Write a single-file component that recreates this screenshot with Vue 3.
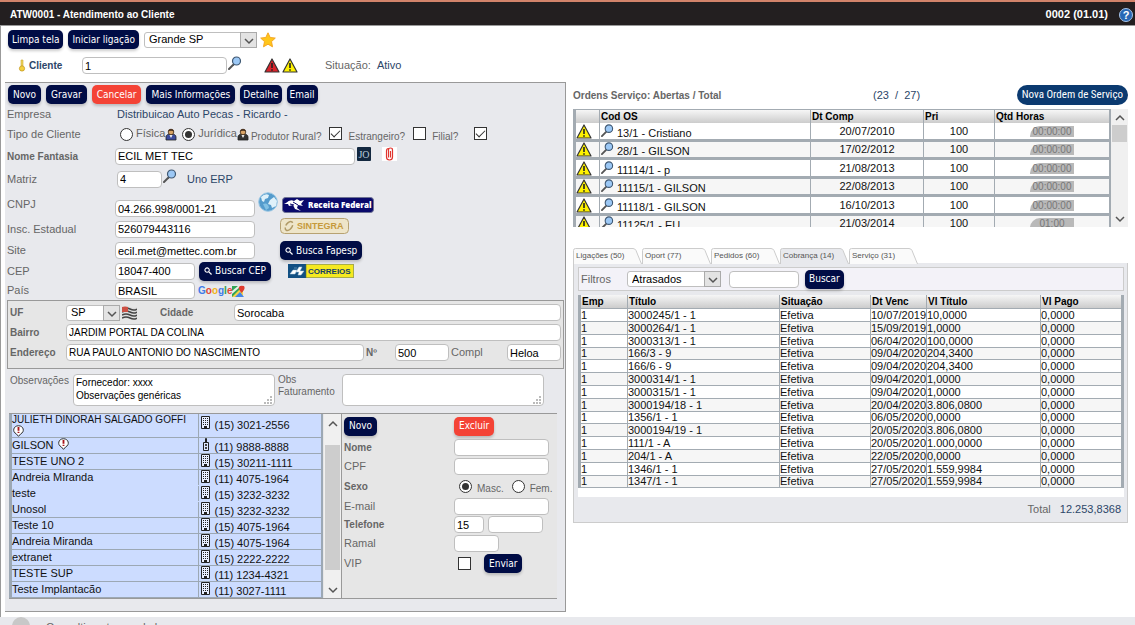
<script setup>
import { ref } from 'vue'

const regiao = ref('Grande SP')
const pessoa = ref('juridica')
const uf = ref('SP')
const sexo = ref('masc')
const filtro = ref('Atrasados')
const observacoes = ref('Fornecedor: xxxx\nObservações genéricas')

const ordens = [
  ['13/1 - Cristiano', '20/07/2010', '00:00:00'],
  ['28/1 - GILSON', '17/02/2012', '00:00:00'],
  ['11114/1 - p', '21/08/2013', '00:00:00'],
  ['11115/1 - GILSON', '22/08/2013', '00:00:00'],
  ['11118/1 - GILSON', '16/10/2013', '00:00:00'],
  ['11125/1 - EU', '21/03/2014', '01:00'],
]

const abas = ['Ligações (50)', 'Oport (77)', 'Pedidos (60)', 'Cobrança (14)', 'Serviço (31)']

const titulos = [
  ['3000245/1 - 1', '10/07/2019', '10,0000'],
  ['3000264/1 - 1', '15/09/2019', '1,0000'],
  ['3000313/1 - 1', '06/04/2020', '100,0000'],
  ['166/3 - 9', '09/04/2020', '204,3400'],
  ['166/6 - 9', '09/04/2020', '204,3400'],
  ['3000314/1 - 1', '09/04/2020', '1,0000'],
  ['3000315/1 - 1', '09/04/2020', '1,0000'],
  ['3000194/18 - 1', '20/04/2020', '3.806,0800'],
  ['1356/1 - 1', '06/05/2020', '0,0000'],
  ['3000194/19 - 1', '20/05/2020', '3.806,0800'],
  ['111/1 - A', '20/05/2020', '1.000,0000'],
  ['204/1 - A', '22/05/2020', '0,0000'],
  ['1346/1 - 1', '27/05/2020', '1.559,9984'],
  ['1347/1 - 1', '27/05/2020', '1.559,9984'],
]

const contatos = [
  { nome: 'JULIETH DINORAH SALGADO GOFFI', fone: '(15) 3021-2556', aviso: true, longo: true },
  { nome: 'GILSON', fone: '(11) 9888-8888', aviso: true, celular: true },
  { nome: 'TESTE UNO 2', fone: '(15) 30211-1111' },
  { nome: 'Andreia MIranda', fone: '(11) 4075-1964', junto: true },
  { nome: 'teste', fone: '(15) 3232-3232', junto: true },
  { nome: 'Unosol', fone: '(15) 3232-3232' },
  { nome: 'Teste 10', fone: '(15) 4075-1964' },
  { nome: 'Andreia Miranda', fone: '(15) 4075-1964' },
  { nome: 'extranet', fone: '(15) 2222-2222' },
  { nome: 'TESTE SUP', fone: '(11) 1234-4321' },
  { nome: 'Teste Implantacão', fone: '(11) 3027-1111' },
]
</script>

<template>
  <svg class="defs" width="0" height="0" aria-hidden="true">
    <symbol id="lupa" viewBox="0 0 14 14">
      <path d="M1 13 5.500 8.500" stroke="#555" stroke-width="2" stroke-linecap="round" />
      <circle cx="8.500" cy="5" r="4" fill="#9cc8f5" stroke="#3f5873" stroke-width="1.200" />
    </symbol>
    <symbol id="alerta" viewBox="0 0 16 15">
      <path d="M8 1 15 14H1Z" stroke="#333" stroke-width="1.200" stroke-linejoin="round" />
      <path d="M8 5v5M8 11.300v1.400" stroke="#222" stroke-width="1.600" />
    </symbol>
    <symbol id="predio" viewBox="0 0 9 13">
      <path d="M.5.5h8v12h-8z" fill="#e8eeff" stroke="#222" />
      <path d="M2 2.500h5M2 4.500h5M2 6.500h5M2 8.500h5" stroke="#222" stroke-dasharray="1 1" />
      <path d="M3 10h3v2H3z" fill="#222" />
    </symbol>
    <symbol id="celular" viewBox="0 0 9 13">
      <path d="M2.500 4.500h5v8h-5zM4.500.5h1v4h-1z" fill="#dce6ff" stroke="#222" />
      <path d="M4 6h2v2H4zM4 9h2v2H4z" fill="#444" />
    </symbol>
    <symbol id="balao" viewBox="0 0 13 13">
      <path d="M6.500 12.300 4 9.500C-.5 7.500.8.800 6.500.8s7 6.700 2.500 8.700Z" fill="#fff" stroke="#222" />
      <path d="M6.500 2.300v4M6.500 7.300v1.400" stroke="#a8141b" stroke-width="2" />
    </symbol>
    <symbol id="busca" viewBox="0 0 9 9">
      <circle cx="3.500" cy="3.500" r="2.500" fill="none" stroke="#fff" stroke-width="1.200" />
      <path d="m5.500 5.500 3 3" stroke="#fff" stroke-width="1.500" />
    </symbol>
    <symbol id="seta" viewBox="0 0 10 8">
      <path d="m1 2 4 4 4-4" fill="none" stroke="currentColor" stroke-width="1.500" />
    </symbol>
    <symbol id="pessoa" viewBox="0 0 12 13">
      <path d="M1 12V9q0-3 5-3t5 3v3Z" fill="currentColor" stroke="#222" stroke-width=".8" />
      <path d="m4.500 7 1.500 3 1.500-3Z" fill="#fff" />
      <circle cx="6" cy="4" r="2.800" fill="#d9a466" stroke="#3b2a1a" stroke-width=".8" />
      <path d="M3.200 3.500C3 0 9 0 8.800 3.500Q6 2 3.200 3.500Z" fill="#4a3320" />
    </symbol>
    <symbol id="alca" viewBox="0 0 8 8">
      <path d="M6 0h2v2H6zM3 3h2v2H3zM6 3h2v2H6zM0 6h2v2H0zM3 6h2v2H3zM6 6h2v2H6z" fill="#bbb" />
    </symbol>
  </svg>

  <div class="tela">
    <header class="topo">
      <h1>ATW0001 - Atendimento ao Cliente</h1>
      <span class="versao">0002 (01.01)</span>
      <svg width="14" height="14" viewBox="0 0 14 14" role="img" aria-label="Ajuda">
        <circle cx="7" cy="7" r="6.500" fill="#2868b5" stroke="#a9c4e6" />
        <text x="7" y="11" text-anchor="middle" class="interrogacao">?</text>
      </svg>
    </header>

    <div class="barra">
      <button class="btn">Limpa tela</button>
      <button class="btn">Iniciar ligação</button>
      <span class="sel sel-regiao">
        <select v-model="regiao" aria-label="Região"><option>Grande SP</option></select>
        <i><svg width="10" height="8"><use href="#seta" /></svg></i>
      </span>
      <svg class="estrela" width="16" height="16" viewBox="0 0 16 16">
        <path d="m8 .8 2.200 4.700 5.100.6-3.800 3.500 1 5.200L8 12.200l-4.500 2.600 1-5.200L.7 6.100l5.100-.6Z" fill="#ffc61a" stroke="#f5a623" />
      </svg>
    </div>

    <div class="cliente">
      <svg width="8" height="13" viewBox="0 0 8 13">
        <path d="M3 1h2v6H3z" fill="#efd45c" stroke="#cba733" stroke-width=".6" />
        <circle cx="4" cy="9.500" r="2.600" fill="#f3d03e" stroke="#c79a22" stroke-width=".8" />
      </svg>
      <label class="neg azul" for="cliente">Cliente</label>
      <input id="cliente" class="txt in-cliente" value="1" />
      <svg class="lupa-alta" width="14" height="14"><use href="#lupa" /></svg>
      <svg class="alerta-v" width="16" height="15" fill="#d9232b"><use href="#alerta" /></svg>
      <svg width="16" height="15" fill="#fff200"><use href="#alerta" /></svg>
      <span class="situacao">Situação:</span><span class="azul">Ativo</span>
    </div>

    <main class="colunas">
      <section class="ficha">
        <div class="acoes">
          <button class="btn">Novo</button>
          <button class="btn">Gravar</button>
          <button class="btn verm">Cancelar</button>
          <button class="btn">Mais Informações</button>
          <button class="btn">Detalhe</button>
          <button class="btn">Email</button>
        </div>

        <div class="linha l-empresa"><span>Empresa</span><div class="azul emp">Distribuicao Auto Pecas - Ricardo -</div></div>
        <div class="linha l-tipo">
          <span>Tipo de Cliente</span>
          <div class="tipo">
            <input id="fis" v-model="pessoa" type="radio" value="fisica" /><label for="fis">Física</label>
            <svg class="ic-p azulp" width="12" height="13"><use href="#pessoa" /></svg>
            <input id="jur" v-model="pessoa" type="radio" value="juridica" /><label for="jur">Jurídica</label>
            <svg class="ic-p cinzap" width="12" height="13"><use href="#pessoa" /></svg>
            <label class="menor" for="rural">Produtor Rural?</label><input id="rural" type="checkbox" checked />
            <label class="menor" for="estr">Estrangeiro?</label><input id="estr" type="checkbox" />
            <label class="menor" for="filial">Filial?</label><input id="filial" class="ck-filial" type="checkbox" checked />
          </div>
        </div>
        <div class="linha l-nome">
          <label class="neg" for="fantasia">Nome Fantasia</label>
          <div class="campo">
            <input id="fantasia" class="txt in-fantasia" value="ECIL MET TEC" />
            <svg width="14" height="14" viewBox="0 0 14 14"><rect width="14" height="14" rx="1" fill="#12273f" /><text x="7" y="11" text-anchor="middle" class="jo">JO</text></svg>
            <svg class="clipe" width="15" height="14" viewBox="0 0 15 14"><path fill="#fff" d="M0 0h15v14H0z" /><path d="M4.500 3.500v6.500q0 3 3 3T10.500 10V3q0-2-2-2t-2 2v7.500M4.500 4q0-2.500 2-2.500M8.500 4v6.500" fill="none" stroke="#e1352f" stroke-width="1.200" /></svg>
          </div>
        </div>
        <div class="linha l-matriz">
          <label for="matriz">Matriz</label>
          <div class="campo">
            <input id="matriz" class="txt in-matriz" value="4" />
            <svg class="lupa-alta" width="14" height="14"><use href="#lupa" /></svg>
            <span class="azul uno">Uno ERP</span>
          </div>
        </div>
        <div class="linha l-cnpj">
          <label for="cnpj">CNPJ</label>
          <div class="campo">
            <input id="cnpj" class="txt in-doc baixo" value="04.266.998/0001-21" />
            <svg class="globo" width="20" height="20" viewBox="0 0 20 20">
              <circle cx="10" cy="10" r="9.300" fill="#549bcc" stroke="#9cc8e4" />
              <path d="M3 5q4-4 8-2l-1 3-3 1-1 3-2-1ZM12 8l4-3 3 4-1 5-4 2-1-3-3-1Z" fill="#dff1fa" />
              <path d="M5 12q5-2 6 4l-3 2Z" fill="#83c1e4" />
            </svg>
          </div>
          <a href="#" class="receita">
            <svg width="92" height="16" viewBox="0 0 92 16">
              <rect x=".5" y=".5" width="91" height="15" rx="3" fill="#0a0a6b" stroke="#6e7393" />
              <path d="M4 6q4-4 8-2l3-2 3 2 4-1-3 4 2 2-5-1-1 3 4 3-6-2-2-4-4 1-1-2-4 0Z" fill="#fff" />
              <path d="m8 7 4 1M11 5l5 3" stroke="#0a0a6b" />
              <text x="26" y="11" class="logo-rf">Receita Federal</text>
            </svg>
          </a>
        </div>
        <div class="linha l-insc">
          <label for="insc">Insc. Estadual</label>
          <div class="campo"><input id="insc" class="txt in-doc" value="526079443116" /></div>
          <a href="#" class="sintegra">
            <svg width="69" height="16" viewBox="0 0 69 16">
              <rect x=".5" y=".5" width="68" height="15" rx="4" fill="#eee5c9" stroke="#b7a272" />
              <ellipse cx="9" cy="8" rx="3" ry="5" transform="rotate(35 9 8)" fill="none" stroke="#b09a66" stroke-width="1.500" stroke-dasharray="9 2" />
              <text x="17" y="11" class="logo-sin">SINTEGRA</text>
            </svg>
          </a>
        </div>
        <div class="linha l-site">
          <label for="site">Site</label>
          <div class="campo"><input id="site" class="txt in-doc" value="ecil.met@mettec.com.br" /></div>
          <div><button class="btn"><svg width="8" height="8"><use href="#busca" /></svg> Busca Fapesp</button></div>
        </div>
        <div class="linha l-cep">
          <label for="cep">CEP</label>
          <div class="campo">
            <input id="cep" class="txt in-curto" value="18047-400" />
            <button class="btn b-cep"><svg width="8" height="8"><use href="#busca" /></svg> Buscar CEP</button>
          </div>
          <a href="#" class="correios">
            <svg width="66" height="14" viewBox="0 0 66 14">
              <path fill="#125083" d="M0 0h18v14H0z" /><path fill="#f5e920" stroke="#596c3a" stroke-width=".6" d="M18 .3h47.700v13.400H18z" />
              <path d="m2 10 3-4h4l-2 4ZM8 8l3-5h3l-2 4h4l-3 4h-3l1-3ZM6 4h3" fill="#fff" stroke="#a8c8df" stroke-width=".5" />
              <text x="20" y="10" class="logo-cor">CORREIOS</text>
            </svg>
          </a>
        </div>
        <div class="linha l-pais">
          <label for="pais">País</label>
          <div class="campo">
            <input id="pais" class="txt in-curto" value="BRASIL" />
            <a href="#" class="google"><span class="g1">G</span><span class="g2">o</span><span class="g3">o</span><span class="g1">g</span><span class="g4">l</span><span class="g2">e</span></a>
            <svg width="13" height="12" viewBox="0 0 13 12">
              <path d="M0 1h11v11H0z" fill="#31a456" /><path d="m0 12 8-8 3 3v5Z" fill="#f6d34a" /><path d="m3 12 5-5 4 5Z" fill="#4385e8" /><path d="m0 6 6-5h3L0 9Z" fill="#e8f0e8" />
              <path d="M9.500 8Q6 4 7 2t5-1q2 3-2.500 7Z" fill="#df3b2f" />
            </svg>
          </div>
        </div>

        <div class="endereco">
          <div class="e-linha">
            <label class="neg e-rot" for="uf">UF</label>
            <span class="sel sel-uf">
              <select id="uf" v-model="uf"><option>SP</option></select>
              <i><svg width="10" height="8"><use href="#seta" /></svg></i>
            </span>
            <svg class="bandeira" width="15" height="14" viewBox="0 0 15 14">
              <path d="M0 1q4-2 8 0t7 0v12q-4 1-7 0t-8 0Z" fill="#ddd" />
              <path d="M0 3q4-2 8 0t7 0M0 6q4-2 8 0t7 0M0 9q4-2 8 0t7 0M0 12q4-2 8 0t7 0" stroke="#444" stroke-width="1.500" fill="none" />
              <path d="M0 1q3-1 6 0v5H0Z" fill="#cc5044" />
            </svg>
            <label class="neg e-cidade" for="cidade">Cidade</label>
            <input id="cidade" class="txt cresce" value="Sorocaba" />
          </div>
          <div class="e-linha">
            <label class="neg e-rot" for="bairro">Bairro</label>
            <input id="bairro" class="txt cresce medio" value="JARDIM PORTAL DA COLINA" />
          </div>
          <div class="e-linha">
            <label class="neg e-rot" for="rua">Endereço</label>
            <input id="rua" class="txt cresce medio" value="RUA PAULO ANTONIO DO NASCIMENTO" />
            <label class="neg e-num" for="num">Nº</label>
            <input id="num" class="txt in-54" value="500" />
            <label class="e-compl" for="compl">Compl</label>
            <input id="compl" class="txt in-54" value="Heloa" />
          </div>
        </div>

        <div class="obs">
          <label class="menor o1" for="obs">Observações</label>
          <span class="area"><textarea id="obs" v-model="observacoes"></textarea><svg width="8" height="8"><use href="#alca" /></svg></span>
          <label class="menor o2" for="obsf">Obs<br />Faturamento</label>
          <span class="area"><textarea id="obsf"></textarea><svg width="8" height="8"><use href="#alca" /></svg></span>
        </div>

        <div class="contatos">
          <div class="lista">
            <table>
              <tbody>
                <tr v-for="c in contatos" :key="c.nome" :class="{ junto: c.junto, longo: c.longo }">
                  <td class="c-nome">{{ c.nome }} <svg v-if="c.aviso" width="13" height="12"><use href="#balao" /></svg></td>
                  <td class="c-fone"><div><svg width="9" height="13"><use :href="c.celular ? '#celular' : '#predio'" /></svg><span>{{ c.fone }}</span></div></td>
                </tr>
              </tbody>
            </table>
          </div>
          <div class="rolagem" aria-hidden="true">
            <svg class="sobe" width="10" height="8"><use href="#seta" /></svg>
            <b class="polegar"></b>
            <svg width="10" height="8"><use href="#seta" /></svg>
          </div>
          <form class="novo" @submit.prevent>
            <div><button class="btn" type="button">Novo</button></div>
            <div><button class="btn verm" type="button">Excluir</button></div>
            <label class="neg" for="cnome">Nome</label><input id="cnome" class="txt in-95" />
            <label for="ccpf">CPF</label><input id="ccpf" class="txt in-95" />
            <span class="neg">Sexo</span>
            <div class="sexo">
              <input id="masc" v-model="sexo" type="radio" value="masc" /><label class="menor" for="masc">Masc.</label>
              <input id="fem" v-model="sexo" type="radio" value="fem" /><label class="menor" for="fem">Fem.</label>
            </div>
            <label for="cmail">E-mail</label><input id="cmail" class="txt in-95" />
            <label class="neg" for="cddd">Telefone</label>
            <div class="fone"><input id="cddd" class="txt in-30" value="15" /><input class="txt in-55" aria-label="Número" /></div>
            <label for="cramal">Ramal</label><input id="cramal" class="txt in-45" />
            <label for="cvip">VIP</label>
            <div class="vip"><input id="cvip" type="checkbox" /><button class="btn">Enviar</button></div>
          </form>
        </div>
      </section>

      <section class="direita">
        <div class="os-topo">
          <h2 class="neg">Ordens Serviço: Abertas / Total</h2>
          <span class="azul conta">(23&nbsp; /&nbsp; 27)</span>
          <button class="nova">Nova Ordem de Serviço</button>
        </div>
        <div class="os-caixa">
          <div class="os-rola">
            <table class="os">
              <colgroup><col class="w-ic" /><col /><col class="w-dt" /><col class="w-pri" /><col class="w-hr" /></colgroup>
              <thead><tr><th></th><th>Cod OS</th><th>Dt Comp</th><th>Pri</th><th>Qtd Horas</th></tr></thead>
              <tbody>
                <tr v-for="o in ordens" :key="o[0]">
                  <td><svg width="16" height="15" fill="#fff200"><use href="#alerta" /></svg></td>
                  <td><div class="cod"><svg width="13" height="13"><use href="#lupa" /></svg><span>{{ o[0] }}</span></div></td>
                  <td class="centro">{{ o[1] }}</td>
                  <td class="centro">100</td>
                  <td><span class="horas">{{ o[2] }}</span></td>
                </tr>
              </tbody>
            </table>
          </div>
          <div class="rolagem curta" aria-hidden="true">
            <svg class="sobe" width="10" height="8"><use href="#seta" /></svg>
            <b class="polegar"></b>
            <svg width="10" height="8"><use href="#seta" /></svg>
          </div>
        </div>

        <nav class="abas">
          <button v-for="(a, i) in abas" :key="a" :class="{ ativa: i === 3 }">
            <svg viewBox="0 0 69 16" width="69" height="16"><path d="M.5 16V2.500q0-2 2-2H60q2 0 3 2L68.500 16" /></svg>
            <span>{{ a }}</span>
          </button>
        </nav>
        <div class="painel">
          <div class="filtros">
            <label for="filtro">Filtros</label>
            <span class="sel sel-filtro">
              <select id="filtro" v-model="filtro"><option>Atrasados</option></select>
              <i><svg width="10" height="8"><use href="#seta" /></svg></i>
            </span>
            <input class="txt in-70" aria-label="Pesquisa" />
            <button class="btn">Buscar</button>
          </div>
          <div class="tit-caixa">
            <table class="tit">
              <colgroup><col class="w-emp" /><col /><col class="w-sit" /><col class="w-venc" /><col class="w-vl" /><col class="w-pago" /></colgroup>
              <thead><tr><th>Emp</th><th>Título</th><th>Situação</th><th>Dt Venc</th><th>Vl Título</th><th>Vl Pago</th></tr></thead>
              <tbody>
                <tr v-for="t in titulos" :key="t[0]">
                  <td>1</td><td>{{ t[0] }}</td><td>Efetiva</td><td>{{ t[1] }}</td><td>{{ t[2] }}</td><td>0,0000</td>
                </tr>
              </tbody>
            </table>
          </div>
          <div class="total"><span>Total</span><span class="azul">12.253,8368</span></div>
        </div>
      </section>
    </main>

    <footer class="rodape"><b></b><span>Consultivo atenc. ndo l</span></footer>
  </div>
</template>

<style>
body { background: #fff; overflow: hidden; }
</style>

<style scoped>
* { box-sizing: border-box; }
.defs { position: absolute; }
svg { flex: none; display: block; }
.tela {
  min-height: 100vh; display: flex; flex-direction: column;
  border-left: 1px solid #9a9a9a;
  font: 11px/13px "Liberation Sans", Arial, sans-serif; color: #666;
}
.topo {
  display: flex; align-items: center; height: 26px; padding: 2px 2px 0 10px; margin-left: -1px;
  background: #231f20; border-top: 2px solid #d2836a; border-bottom: 1px solid #999; color: #fff;
}
.topo h1 { margin: 0; flex: 1; font-size: 10px; font-weight: 700; }
.versao { font-size: 11px; font-weight: 700; margin-right: 11px; }
.interrogacao { font: 700 11px "Liberation Sans", Arial, sans-serif; fill: #fff; }
.jo { font: 10px "Liberation Serif", serif; fill: #b9cbdc; }
.neg { font-weight: 700; font-size: 10px; }
.azul { color: #2c4668; }
.menor { font-size: 10px; }

.btn {
  display: inline-flex; align-items: center; gap: 3px; height: 19px; padding: 0 5px;
  border: 0; border-radius: 5px; background: #000c45; color: #fff; white-space: nowrap;
  font: 10px/12px "DejaVu Sans Condensed", "Noto Sans", sans-serif;
  box-shadow: 0 2px 3px #0003;
}
.verm { background: #f44336; }
.txt {
  height: 17px; min-width: 0; margin: 0; padding: 0 2px; border: 1px solid #bfbfbf; border-radius: 4px;
  background: #fff; color: #000; font: 11px/13px "Liberation Sans", Arial, sans-serif; outline: 0;
}
.medio { font-size: 10px; }
input[type="radio"], input[type="checkbox"] {
  appearance: none; flex: none; display: grid; place-items: center; width: 13px; height: 13px; margin: 0;
  border: 1px solid #333; background: #fff;
}
input[type="radio"] { border-radius: 50%; }
input[type="radio"]:checked::after { content: ""; width: 7px; height: 7px; border-radius: 50%; background: #333; }
input[type="checkbox"]:checked::after {
  content: ""; width: 8px; height: 4px; margin-bottom: 3px;
  border: solid #333; border-width: 0 0 1px 1px; transform: rotate(-45deg);
}
.sel { position: relative; display: inline-flex; height: 16px; }
.sel select {
  appearance: none; width: 100%; padding: 0 4px; border: 1px solid #bfbfbf; border-radius: 3px; background: #fff;
  font: 11px/13px "Liberation Sans", Arial, sans-serif; color: #000;
}
.sel i {
  position: absolute; right: 0; top: 0; bottom: 0; width: 17px; display: grid; place-items: center;
  border: 1px solid #aaa; background: #e3e3e3; color: #555; pointer-events: none;
}
.sel i svg { margin-top: 2px; }

.barra { display: flex; align-items: center; padding: 4px 0 0 7px; }
.barra .btn { padding: 0 4px; }
.barra .btn + .btn { margin-left: 5px; }
.sel-regiao { width: 113px; margin-left: 5px; }
.estrela { margin-left: 3px; }
.cliente { display: flex; align-items: center; height: 33px; padding-left: 17px; }
.cliente label { width: 53px; margin-left: 3px; }
.in-cliente { width: 145px; }
.lupa-alta { margin: -6px 0 0 1px; }
.alerta-v { margin: 0 2px 0 22px; }
.situacao { margin: 0 6px 0 27px; }

.colunas { display: grid; grid-template-columns: 561fr 569fr; margin-left: 4px; align-items: start; }
.ficha { min-width: 0; background: #e8e9ed; border: solid #999; border-width: 1px 1px 1px 0; padding: 2px 0 12px 2px; }
.acoes { display: flex; gap: 5px; padding-left: 1px; }
.acoes .btn:nth-child(n + 5) { padding: 0 3px; }
.linha { display: grid; grid-template-columns: 108px 165px 1fr; align-items: center; }
.campo { display: flex; align-items: center; }
.emp { grid-column: 2 / -1; padding-left: 2px; }
.l-empresa { height: 20px; }
.l-tipo { height: 21px; }
.tipo { grid-column: 2 / -1; display: flex; align-items: center; padding-left: 5px; }
.tipo label { margin: -2px 0 0 3px; }
.tipo .ic-p { margin: 0 5px 0 0; }
.tipo .cinzap { margin-right: 2px; }
.tipo .menor { margin: 4px 8px 0 6px; }
.tipo .ic-p + label { margin-left: 0; }
.tipo input[type="checkbox"] { margin-bottom: 2px; }
.tipo .ck-filial { margin-left: 8px; }
.azulp { color: #3c4c9e; }
.cinzap { color: #333; }
.l-nome { height: 22px; }
.l-nome .campo, .l-matriz .campo { grid-column: 2 / -1; }
.in-fantasia { width: 240px; margin-right: 2px; }
.l-nome svg { margin-top: -4px; }
.l-nome .clipe { margin-left: 11px; }
.l-matriz { height: 24px; }
.in-matriz { width: 45px; margin-left: 2px; }
.uno { margin-left: 10px; }
.l-cnpj { height: 27px; }
.l-cnpj .campo { align-items: flex-start; }
.l-cnpj .baixo { margin-top: 8px; }
.in-doc { width: 140px; }
.globo { margin-left: 3px; }
.receita { padding-left: 2px; }
.l-insc { height: 22px; }
.sintegra { margin-bottom: 6px; }
.l-site { height: 21px; }
.l-cep { height: 20px; }
.in-curto { width: 80px; }
.b-cep { margin-left: 4px; }
.correios { padding-left: 8px; }
.l-pais { height: 19px; }
.google { margin-left: 3px; font: 700 10px/12px "Liberation Sans", Arial, sans-serif; text-decoration: none; }
.g1 { color: #3f7be8; } .g2 { color: #e2453a; } .g3 { color: #f0b41c; } .g4 { color: #2f9e50; }
.logo-rf { font: 800 8px "Open Sans", sans-serif; fill: #fff; }
.logo-sin { font: 700 9px "Liberation Sans", Arial, sans-serif; fill: #c69a3c; }
.logo-cor { font: 700 8px "Liberation Sans", Arial, sans-serif; fill: #123e68; }

.endereco { display: flex; flex-direction: column; gap: 3px; margin-right: 1px; padding: 3px 2px 7px 2px; border: 1px solid #999; background: #e6e6e6; }
.e-linha { display: flex; align-items: center; }
.e-rot { width: 56px; flex: none; }
.cresce { flex: 1; }
.sel-uf { width: 54px; }
.bandeira { margin-left: 2px; }
.e-cidade { width: 74px; margin-left: 23px; }
.e-num { width: 31px; padding-left: 2px; }
.in-54 { width: 54px; }
.e-compl { width: 58px; padding-left: 2px; }

.obs { display: flex; padding: 5px 0 0 3px; }
.o1 { width: 63px; }
.o2 { width: 67px; padding-left: 3px; line-height: 12px; }
.area { position: relative; display: flex; width: 202px; height: 32px; }
.area textarea {
  width: 100%; resize: none; margin: 0; padding: 1px 2px; border: 1px solid #bfbfbf; border-radius: 4px;
  font: 10px/13px "Liberation Sans", Arial, sans-serif; color: #000; overflow: hidden;
}
.area svg { position: absolute; right: 3px; bottom: 2px; }

.contatos { display: flex; margin: 7px 8px 0 2px; border: solid #999; border-width: 1px 0; background: #e6e6e6; }
.lista { width: 314px; background: #fff; }
.lista table { width: 100%; border-collapse: collapse; border: solid #9ca8b4; border-width: 0 2px 0 3px; background: #ccdcff; color: #111; table-layout: fixed; }
.lista tr { height: 16px; }
.lista td { padding: 1px 0 0; border-bottom: 1px solid #9ca8b4; line-height: 13px; vertical-align: top; }
.lista .junto td { border-bottom-color: #ccdcff; }
.c-nome svg { display: inline-block; vertical-align: -1px; margin-top: -2px; }
.longo .c-nome { font-size: 10px; line-height: 11px; padding-top: 0; }
.longo .c-nome svg { display: block; margin: 0; }
.c-fone { width: 124px; border-left: 1px solid #9ca8b4; }
.c-fone div { display: flex; height: 14px; padding-left: 2px; }
.longo .c-fone div { margin-top: 2px; }
.c-fone span { margin: 2px 0 0 5px; }
.c-fone svg { margin-top: -1px; }
.rolagem {
  display: flex; flex-direction: column; align-items: center; width: 17px; padding: 6px 0 4px; margin-left: 1px;
  background: #f0f0f0; color: #555;
}
.rolagem path { stroke-width: 2; }
.contatos .rolagem { border-right: 1px solid #999; width: 18px; }
.sobe { transform: rotate(180deg); }
.polegar { width: 15px; height: 125px; margin: 17px 0 auto; background: #cdcdcd; }
.novo {
  display: grid; flex: 1; grid-template-columns: 110px 1fr; align-items: center; align-content: start;
  grid-template-rows: 22px 20px 18px 22px 18px 19px 19px 21px; padding: 1px 0 0 2px;
}
.in-95 { width: 95px; } .in-30 { width: 30px; } .in-55 { width: 55px; } .in-45 { width: 45px; } .in-70 { width: 70px; }
.sexo { display: flex; align-items: center; padding-left: 5px; white-space: nowrap; }
.sexo label { margin: 4px 8px 0 5px; }
.sexo label:last-child { margin-right: 0; }
.fone { display: flex; gap: 4px; }
.vip { display: flex; align-items: center; gap: 13px; padding-left: 4px; }

.direita { min-width: 0; padding: 0 7px; }
.os-topo { display: flex; align-items: center; padding: 3px 0 4px; }
.os-topo h2 { margin: 0; width: 300px; line-height: 13px; }
.conta { flex: 1; }
.nova {
  height: 20px; padding: 0 5px; border: 0; border-radius: 10px; background: #0b3a70; color: #fff;
  font: 400 11px/14px "Roboto Condensed", "Liberation Sans Narrow", Roboto, sans-serif; white-space: nowrap;
}
.os-caixa { display: flex; height: 118px; overflow: hidden; }
.os-rola { flex: 1; overflow: hidden; }
table { border-spacing: 0; }
.os, .tit { width: 100%; table-layout: fixed; border-collapse: separate; color: #111; }
th { text-align: left; font-size: 10px; color: #000; padding: 0 1px; background: linear-gradient(#f6f6f6, #ccc); white-space: nowrap; }
.os { border: solid #a3abb2; border-width: 1px 2px 0 3px; }
.os th { height: 13px; line-height: 12px; border-right: 1px solid #a3abb2; }
.os td { padding: 0; border-right: 1px solid #a3abb2; border-bottom: 3px solid #a3abb2; line-height: 13px; background: #fff; }
.os tr > :last-child { border-right: 0; }
.os tbody tr { height: 18px; }
.os tbody tr:nth-child(odd) { height: 19px; }
.os tbody tr:nth-child(even) td, .tit tbody tr:nth-child(even) td { background: #f6f6f6; }
.w-ic { width: 24px; } .w-dt { width: 113px; } .w-pri { width: 71px; } .w-hr { width: 114px; }
.centro { text-align: center; }
.cod { display: flex; height: 15px; padding-left: 1px; }
.cod span { margin: 3px 0 0 3px; line-height: 12px; }
.horas {
  display: block; width: 44px; margin: 0 auto; height: 11px; line-height: 11px; text-align: center;
  background: #b9b9b9; color: #777; border-top-left-radius: 10px; font-size: 10px;
}
.curta .polegar { height: 17px; margin-top: 3px; }
.curta { padding-top: 5px; margin: 0; }

.abas { display: flex; margin-top: 21px; }
.abas button { position: relative; height: 15px; width: 69px; padding: 0 3px; border: 0; background: none; text-align: left; color: #555; font: 8px/12px "Liberation Sans", Arial, sans-serif; }
.abas svg { position: absolute; left: 0; top: 0; fill: #fafafa; stroke: #ccc; }
.abas .ativa svg { fill: #e8e9ed; }
.abas span { position: relative; }
.painel { padding: 4px 3px 6px 4px; border: solid #ccc; border-width: 0 1px 1px; background: #e8e9ed; }
.filtros { display: flex; align-items: center; height: 24px; padding-left: 2px; border: 1px solid #ccc; background: #f3f2f8; }
.filtros label { width: 46px; }
.sel-filtro { width: 94px; margin-right: 8px; }
.filtros .btn { margin-left: 6px; padding: 0 4px; }
.tit-caixa { margin-top: 4px; padding-bottom: 9px; background: #fff; }
.tit { border: solid #a3abb2; border-width: 0 3px; }
.tit th { height: 13px; line-height: 13px; border-right: 1px solid #a3abb2; border-bottom: 1px solid #a3abb2; }
.tit td { height: 13px; padding: 0; line-height: 11px; border-right: 1px solid #a3abb2; border-bottom: 1px solid #a3abb2; white-space: nowrap; background: #fff; }
.tit tr:nth-child(5n + 4) td { height: 12px; }
.tit tr > :last-child { border-right: 0; }
.w-emp { width: 47px; } .w-sit { width: 91px; } .w-venc { width: 56px; } .w-vl { width: 114px; } .w-pago { width: 80px; }
.total { display: flex; justify-content: flex-end; gap: 9px; padding: 6px 3px 0; }

.rodape { display: flex; gap: 16px; height: 8px; margin-top: 5px; margin-left: -1px; padding: 0 0 0 12px; overflow: hidden; background: #e8e9ed; }
.rodape b { flex: none; width: 18px; height: 18px; border-radius: 50%; background: #c8c8c8; }
.rodape span { padding-top: 4px; }
</style>
